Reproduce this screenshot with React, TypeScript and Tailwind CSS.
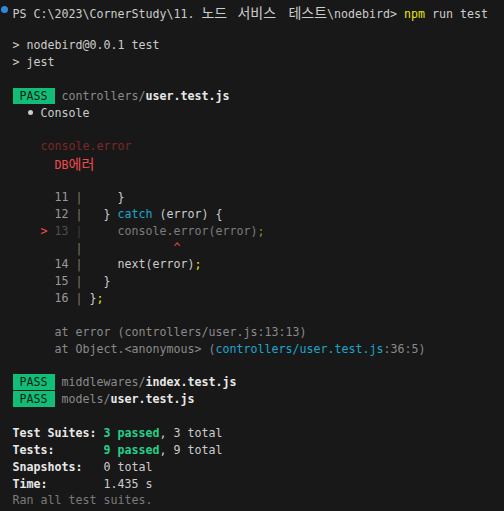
import type { ReactNode } from 'react';

function Ln({ children }: { children?: ReactNode }) {
  return <div className="h-[16.86px] leading-[16.86px] whitespace-pre">{children}</div>;
}

function Pass() {
  return (
    <span className="inline-block h-[16px] bg-[#12bd78] align-top leading-[16px] text-[#0b1f16]">
      {' PASS '}
    </span>
  );
}

function Ko({ children, className = '' }: { children: ReactNode; className?: string }) {
  return (
    <span className={`text-[14px] leading-[16px] font-['Noto_Sans_CJK_KR',sans-serif] ${className}`}>{children}</span>
  );
}

const pipe = 'text-[#86785f]';
const num = 'text-[#9a9a9a]';

export default function App() {
  return (
    <div className="relative min-h-screen bg-[#181818] pt-[3.5px] pl-[12.5px] font-['DejaVu_Sans_Mono','Noto_Sans_CJK_KR',monospace] text-[11.63px] text-[#cccccc]">
      {/* shell integration marker */}
      <div className="absolute left-[0.5px] top-[5.5px] h-[7px] w-[7px] rounded-full bg-[#2f8ad6]" />

      <Ln>
        {'PS C:\\2023\\CornerStudy\\11. '}
        <span className="inline-block w-[125.5px]">
          <Ko className="inline-block w-[36px]">노드</Ko>
          <Ko className="inline-block w-[51px]">서비스</Ko>
          <Ko className="inline-block w-[38.5px]">테스트</Ko>
        </span>
        {'\\nodebird> '}
        <span className="text-[#e5e510]">npm</span>
        {' run test'}
      </Ln>
      <Ln />
      <Ln>{'> nodebird@0.0.1 test'}</Ln>
      <Ln>{'> jest'}</Ln>
      <Ln />
      <Ln>
        <Pass />
        <span className="text-[#8a8a8a]">{' controllers/'}</span>
        <span className="font-bold text-[#e8e8e8]">user.test.js</span>
      </Ln>
      <Ln>
        {'  '}
        <span className="inline-flex h-[16px] w-[7px] items-center justify-center align-top">
          <span className="h-[5px] w-[5px] rounded-full bg-[#cccccc]" />
        </span>
        {' Console'}
      </Ln>
      <Ln />
      <Ln>
        <span className="text-[#7a2828]">{'    console.error'}</span>
      </Ln>
      <Ln>
        <span className="text-[#f14c4c]">
          {'      DB'}
          <Ko>에러</Ko>
        </span>
      </Ln>
      <Ln />
      <Ln>
        {'      '}
        <span className={num}>11</span>
        {' '}
        <span className={pipe}>|</span>
        {'     }'}
      </Ln>
      <Ln>
        {'      '}
        <span className={num}>12</span>
        {' '}
        <span className={pipe}>|</span>
        {'   } '}
        <span className="text-[#1aa7cf]">catch</span>
        {' (error) {'}
      </Ln>
      <Ln>
        {'    '}
        <span className="text-[#f14c4c]">{'>'}</span>
        {' '}
        <span className="text-[#4e4e4e]">13</span>
        {' '}
        <span className="text-[#3e3e3e]">|</span>
        <span className="text-[#7c7c7c]">
          {'     console'}
          <span className="text-[#8f8a3c]">.</span>
          {'error(error)'}
          <span className="text-[#8f8a3c]">;</span>
        </span>
      </Ln>
      <Ln>
        {'         '}
        <span className={pipe}>|</span>
        {'             '}
        <span className="text-[#f14c4c]">^</span>
      </Ln>
      <Ln>
        {'      '}
        <span className={num}>14</span>
        {' '}
        <span className={pipe}>|</span>
        {'     next(error)'}
        <span className="text-[#e5e510]">;</span>
      </Ln>
      <Ln>
        {'      '}
        <span className={num}>15</span>
        {' '}
        <span className={pipe}>|</span>
        {'   }'}
      </Ln>
      <Ln>
        {'      '}
        <span className={num}>16</span>
        {' '}
        <span className={pipe}>|</span>
        {' }'}
        <span className="text-[#e5e510]">;</span>
      </Ln>
      <Ln />
      <Ln>
        <span className="text-[#8a8a8a]">{'      at error (controllers/user.js:13:13)'}</span>
      </Ln>
      <Ln>
        <span className="text-[#8a8a8a]">
          {'      at Object.<anonymous> ('}
          <span className="text-[#1aa7cf]">controllers/user.test.js</span>
          {':36:5)'}
        </span>
      </Ln>
      <Ln />
      <Ln>
        <Pass />
        <span className="text-[#8a8a8a]">{' middlewares/'}</span>
        <span className="font-bold text-[#e8e8e8]">index.test.js</span>
      </Ln>
      <Ln>
        <Pass />
        <span className="text-[#8a8a8a]">{' models/'}</span>
        <span className="font-bold text-[#e8e8e8]">user.test.js</span>
      </Ln>
      <Ln />
      <Ln>
        <span className="font-bold text-[#e8e8e8]">{'Test Suites: '}</span>
        <span className="font-bold text-[#23d18b]">3 passed</span>
        {', 3 total'}
      </Ln>
      <Ln>
        <span className="font-bold text-[#e8e8e8]">{'Tests:       '}</span>
        <span className="font-bold text-[#23d18b]">9 passed</span>
        {', 9 total'}
      </Ln>
      <Ln>
        <span className="font-bold text-[#e8e8e8]">{'Snapshots:   '}</span>
        {'0 total'}
      </Ln>
      <Ln>
        <span className="font-bold text-[#e8e8e8]">{'Time:        '}</span>
        {'1.435 s'}
      </Ln>
      <Ln>
        <span className="text-[#7a7a7a]">Ran all test suites.</span>
      </Ln>
    </div>
  );
}
